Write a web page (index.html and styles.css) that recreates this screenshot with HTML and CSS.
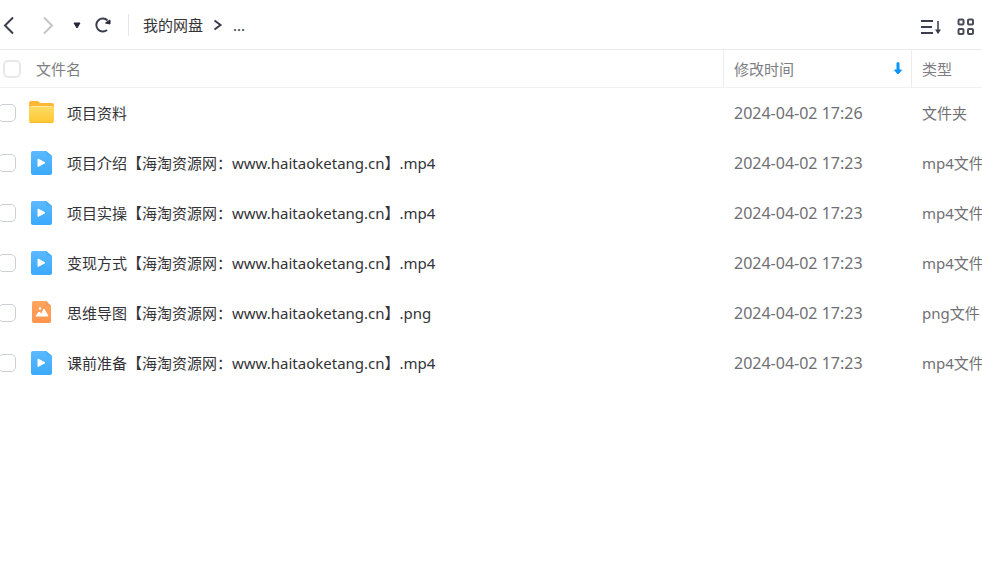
FILE: index.html
```html
<!DOCTYPE html>
<html lang="zh-CN">

<head>
    <meta charset="UTF-8">
    <meta name="viewport" content="width=device-width, initial-scale=1.0">
    <title>我的网盘</title>
    <link rel="stylesheet" href="styles.css">
</head>

<body>
    <!-- 公用图标 -->
    <svg class="sprite" aria-hidden="true">
        <defs>
            <linearGradient id="blue" x1="0" y1="0" x2="0" y2="1">
                <stop offset="0" stop-color="#5cb9ff" />
                <stop offset="1" stop-color="#3ba9fd" />
            </linearGradient>
            <linearGradient id="yellow" x1="0" y1="0" x2="0" y2="1">
                <stop offset="0" stop-color="#ffdb66" />
                <stop offset="1" stop-color="#ffc832" />
            </linearGradient>
            <linearGradient id="orange" x1="0" y1="0" x2="0" y2="1">
                <stop offset="0" stop-color="#ffa55f" />
                <stop offset="1" stop-color="#ff944e" />
            </linearGradient>
        </defs>
        <symbol id="folder" viewBox="0 0 26 26">
            <path d="M0 3a2 2 0 0 1 2-2h7l2 2h12a2 2 0 0 1 2 2v6H0z" fill="#fdb733" />
            <path d="M0 8c0-2 1-2 2-2h21c1 0 2 0 2 2v13a2 2 0 0 1-2 2H2a2 2 0 0 1-2-2z" fill="url(#yellow)" />
            <path d="M2 6.500h21" stroke="#ffe9a3" />
            <path d="M1 22.500h23" stroke="#f7b829" />
        </symbol>
        <symbol id="video" viewBox="0 0 26 26">
            <path d="M4 1h13l6 5v17a2 2 0 0 1-2 2H4a2 2 0 0 1-2-2V3a2 2 0 0 1 2-2z" fill="url(#blue)" />
            <path d="M17 1l6 5h-4a2 2 0 0 1-2-2z" fill="#4aaefb" />
            <path d="M9 9v7.500l7-3.750z" fill="#fff" stroke="#fff" stroke-linejoin="round" />
        </symbol>
        <symbol id="image" viewBox="0 0 26 26">
            <path d="M5 1h12l5 5v15a2 2 0 0 1-2 2H5a2 2 0 0 1-2-2V3a2 2 0 0 1 2-2z" fill="url(#orange)" />
            <path d="M17 1l5 5h-3a2 2 0 0 1-2-2z" fill="#fa9552" />
            <path d="M7 16l3-4 2.500 2 2.500-5 4 7z" fill="#fff" stroke="#fff" stroke-linejoin="round" />
            <circle cx="11" cy="8.500" r="1.300" fill="#fff" />
        </symbol>
    </svg>

    <header class="toolbar">
        <button class="btn back" type="button" aria-label="后退">
            <svg width="18" height="20" viewBox="0 0 18 20"><path d="M13 2.500L5 10.500l8 8" fill="none" stroke="#3a3d4c" stroke-width="2" /></svg>
        </button>
        <button class="btn forward" type="button" aria-label="前进" disabled>
            <svg width="18" height="20" viewBox="0 0 18 20"><path d="M5 2.500l8 8-8 8" fill="none" stroke="#c4c4c6" stroke-width="2" /></svg>
        </button>
        <button class="btn history" type="button" aria-label="历史记录">
            <svg width="14" height="18" viewBox="0 0 14 18"><path d="M4 7h6l-3 5z" fill="#25283a" stroke="#25283a" stroke-linejoin="round" /></svg>
        </button>
        <button class="btn refresh" type="button" aria-label="刷新">
            <svg width="18" height="18" viewBox="0 0 18 18">
                <path d="M13.500 4.500A6.500 6.500 0 1 0 13 14" fill="none" stroke="#3a3d4c" stroke-width="2" />
                <path d="M11.500 7l4.500-3v4z" fill="#25283a" stroke="#25283a" stroke-linejoin="round" />
            </svg>
        </button>
        <nav class="path" aria-label="当前位置">
            <a href="#">我的网盘</a>
            <svg width="10" height="12" viewBox="0 0 10 12"><path d="M1.500 1.500L7.500 6l-6 4.500" fill="none" stroke="#3a3d4c" stroke-width="2" /></svg>
            <a href="#">...</a>
        </nav>
        <div class="tools">
            <button class="btn" type="button" aria-label="排序">
                <svg width="21" height="18" viewBox="0 0 21 18">
                    <path d="M0 3h12M0 9h11M0 15h12" stroke="#3a3d4c" stroke-width="2" />
                    <path d="M17 3v12" stroke="#6b6d78" stroke-width="2" />
                    <path d="M14 11.500h6L17 16z" fill="#3a3d4c" />
                </svg>
            </button>
            <button class="btn" type="button" aria-label="缩略图">
                <svg width="18" height="18" viewBox="0 0 18 18" fill="none" stroke="#4a4c58" stroke-width="2">
                    <rect x="1.500" y="1.500" width="5" height="5" rx="1" />
                    <rect x="11" y="1.500" width="5" height="5" rx="1" />
                    <rect x="1.500" y="11" width="5" height="5" rx="1" />
                    <rect x="11" y="11" width="5" height="5" rx="1" />
                </svg>
            </button>
        </div>
    </header>

    <table class="files">
        <colgroup>
            <col>
            <col class="col-time">
            <col class="col-type">
        </colgroup>
        <thead>
            <tr>
                <th>
                    <div class="cell all">
                        <input type="checkbox" id="all">
                        <label for="all">文件名</label>
                    </div>
                </th>
                <th>
                    <button class="sort" type="button">
                        修改时间
                        <svg width="10" height="14" viewBox="0 0 10 14"><path d="M5 1.500v8" stroke="#0a94ff" stroke-width="3" stroke-linecap="round" /><path d="M1.500 8h7L5 12z" fill="#0a94ff" stroke="#0a94ff" stroke-linejoin="round" /></svg>
                    </button>
                </th>
                <th>类型</th>
            </tr>
        </thead>
        <tbody>
            <tr>
                <td>
                    <div class="cell">
                        <input type="checkbox" id="f1">
                        <svg class="icon"><use href="#folder" /></svg>
                        <label for="f1">项目资料</label>
                    </div>
                </td>
                <td class="time">2024-04-02 17:26</td>
                <td>文件夹</td>
            </tr>
            <tr>
                <td>
                    <div class="cell">
                        <input type="checkbox" id="f2">
                        <svg class="icon"><use href="#video" /></svg>
                        <label for="f2">项目介绍【海淘资源网：www.haitaoketang.cn】.mp4</label>
                    </div>
                </td>
                <td class="time">2024-04-02 17:23</td>
                <td>mp4文件</td>
            </tr>
            <tr>
                <td>
                    <div class="cell">
                        <input type="checkbox" id="f3">
                        <svg class="icon"><use href="#video" /></svg>
                        <label for="f3">项目实操【海淘资源网：www.haitaoketang.cn】.mp4</label>
                    </div>
                </td>
                <td class="time">2024-04-02 17:23</td>
                <td>mp4文件</td>
            </tr>
            <tr>
                <td>
                    <div class="cell">
                        <input type="checkbox" id="f4">
                        <svg class="icon"><use href="#video" /></svg>
                        <label for="f4">变现方式【海淘资源网：www.haitaoketang.cn】.mp4</label>
                    </div>
                </td>
                <td class="time">2024-04-02 17:23</td>
                <td>mp4文件</td>
            </tr>
            <tr>
                <td>
                    <div class="cell">
                        <input type="checkbox" id="f5">
                        <svg class="icon"><use href="#image" /></svg>
                        <label for="f5">思维导图【海淘资源网：www.haitaoketang.cn】.png</label>
                    </div>
                </td>
                <td class="time">2024-04-02 17:23</td>
                <td>png文件</td>
            </tr>
            <tr>
                <td>
                    <div class="cell">
                        <input type="checkbox" id="f6">
                        <svg class="icon"><use href="#video" /></svg>
                        <label for="f6">课前准备【海淘资源网：www.haitaoketang.cn】.mp4</label>
                    </div>
                </td>
                <td class="time">2024-04-02 17:23</td>
                <td>mp4文件</td>
            </tr>
        </tbody>
    </table>
</body>

</html>
```
FILE: styles.css
```css
* {
    margin: 0;
    padding: 0;
    box-sizing: border-box;
}

body {
    background: #fff;
    color: #333337;
    font: 15px/22px "Noto Sans", "Noto Sans CJK SC", sans-serif;
    overflow-x: hidden;
}

svg {
    display: block;
    flex: none;
}

.sprite {
    position: absolute;
    width: 0;
    height: 0;
}

/* 顶部工具栏 */
.toolbar {
    display: flex;
    align-items: center;
    height: 50px;
    border-bottom: 1px solid #ececee;
}

.btn {
    border: 0;
    background: none;
    cursor: pointer;
}

.forward {
    margin-left: 21px;
    cursor: default;
}

.history {
    margin-left: 13px;
}

.refresh {
    margin: 0 16px 0 10px;
}

.path {
    display: flex;
    align-items: center;
    gap: 10px;
    padding-left: 14px;
    border-left: 1px solid #e6e6e8;
}

.path a {
    color: inherit;
    text-decoration: none;
}

.tools {
    display: flex;
    gap: 15px;
    margin-left: auto;
    padding: 4px 7px 0 0;
}

/* 文件列表 */
.files {
    width: 100%;
    table-layout: fixed;
    border-collapse: separate;
    border-spacing: 0;
}

.col-time {
    width: 188px;
}

.col-type {
    width: 71px;
}

th {
    height: 38px;
    color: #7d7d82;
    font-weight: normal;
    text-align: left;
    border-bottom: 1px solid #f1f1f3;
}

th,
td {
    padding-left: 11px;
    white-space: nowrap;
    overflow: hidden;
}

th + th {
    padding-left: 10px;
    border-left: 1px solid #ececee;
}

th:first-child,
td:first-child {
    padding-left: 0;
}

td {
    height: 50px;
    color: #707074;
}

.time {
    font-size: 16px;
}

.cell {
    display: flex;
    align-items: center;
    margin-left: -2px;
    color: #333337;
}

.all {
    gap: 15px;
    margin-left: 3px;
    color: inherit;
}

input {
    appearance: none;
    flex: none;
    width: 18px;
    height: 18px;
    background: #fff;
    border: 1px solid #ccd0d6;
    border-radius: 5px;
}

.all input {
    border: 2px solid #e8e8ea;
}

input:checked {
    background: #0a94ff;
}

.icon {
    width: 26px;
    height: 26px;
    margin: 0 12px 0 13px;
}

.sort {
    display: flex;
    align-items: center;
    justify-content: space-between;
    width: 100%;
    padding-right: 8px;
    border: 0;
    background: none;
    color: inherit;
    font: inherit;
    cursor: pointer;
}
```
